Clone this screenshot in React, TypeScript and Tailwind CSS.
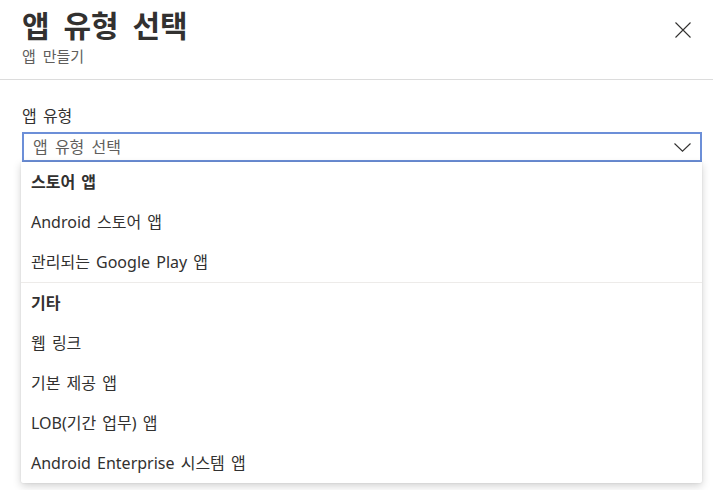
import React from 'react';

const groups = [
  {
    title: '스토어 앱',
    items: ['Android 스토어 앱', '관리되는 Google Play 앱'],
  },
  {
    title: '기타',
    items: ['웹 링크', '기본 제공 앱', 'LOB(기간 업무) 앱', 'Android Enterprise 시스템 앱'],
  },
];

export default function App() {
  return (
    <div className="w-[713px] h-[490px] bg-white text-[#323130] overflow-hidden font-['Noto_Sans','Noto_Sans_CJK_KR',sans-serif]">
      {/* header */}
      <div className="flex items-start justify-between h-[80px] border-b border-[#dcdcdc] px-[22px]">
        <div className="pt-[6px]">
          <h1 className="text-[30px] leading-[40px] font-bold [word-spacing:6px]">앱 유형 선택</h1>
          <p className="mt-[1px] text-[15px] leading-[18px] text-[#605e5c] [word-spacing:3px]">앱 만들기</p>
        </div>
        <button className="mt-[22px] text-[#323130]">
          <svg width="16" height="16" viewBox="0 0 16 16" fill="none" stroke="currentColor" strokeWidth="1.1">
            <path d="M0.5 0.5 L15.5 15.5 M15.5 0.5 L0.5 15.5" />
          </svg>
        </button>
      </div>

      {/* body */}
      <div className="pl-[22px] pt-[26px] text-[16px] [word-spacing:2px]">
        <label className="block leading-[20px] mb-[6px]">앱 유형</label>
        <div className="flex items-center justify-between h-[30px] w-[680px] border-2 border-[#6c8fd8] px-[9px]">
          <span className="text-[#605e5c] [word-spacing:3px]">앱 유형 선택</span>
          <svg width="17" height="9" viewBox="0 0 17 9" fill="none" stroke="#323130" strokeWidth="1.1">
            <path d="M0.5 0.5 L8.5 8.2 L16.5 0.5" />
          </svg>
        </div>
        <div className="ml-[-1px] w-[681px] bg-white rounded-b-[2px] shadow-[0_3px_8px_rgba(0,0,0,0.18),0_0_2px_rgba(0,0,0,0.1)]">
          {groups.map((g, gi) => (
            <div key={gi} className={gi > 0 ? 'border-t border-[#edebe9]' : ''}>
              <div className="h-[40px] flex items-center pl-[10px] font-bold">{g.title}</div>
              {g.items.map((it) => (
                <div key={it} className="h-[40px] flex items-center pl-[10px]">
                  {it}
                </div>
              ))}
            </div>
          ))}
        </div>
      </div>
    </div>
  );
}
